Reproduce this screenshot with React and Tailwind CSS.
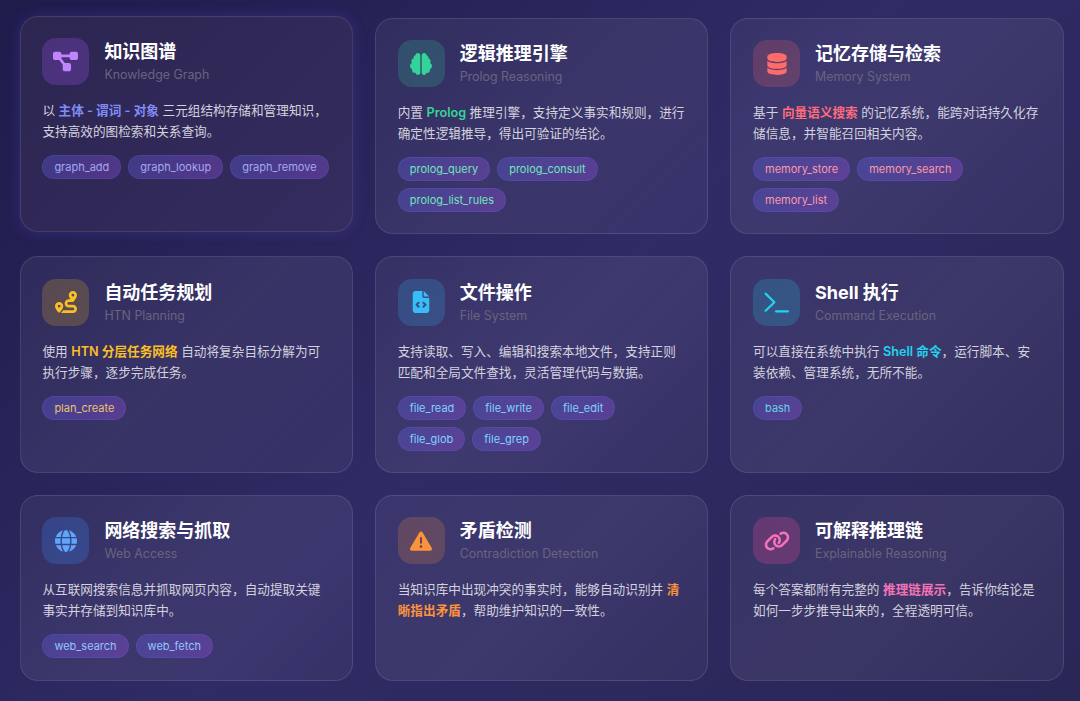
import {
  FaDiagramProject,
  FaBrain,
  FaDatabase,
  FaRoute,
  FaFileCode,
  FaGlobe,
  FaTriangleExclamation,
  FaLink,
} from "react-icons/fa6";

const TerminalIcon = ({ className }) => (
  <svg viewBox="0 0 24 24" fill="none" stroke="currentColor" strokeWidth="2.1" strokeLinecap="round" strokeLinejoin="round" className={className}>
    <path d="M1.5 3.5 10 11.8 1.5 20" />
    <path d="M11.5 20.5H23" />
  </svg>
);

const CARDS = [
  {
    icon: FaDiagramProject, iconClass: "text-[#c084fc] text-[25px]", box: "bg-[#a855f7]/25",
    title: "知识图谱", sub: "Knowledge Graph", hl: "text-[#818cf8]", chip: "text-[#a5a8f0]",
    before: "以 ", mark: "主体 - 谓词 - 对象", after: " 三元组结构存储和管理知识，支持高效的图检索和关系查询。",
    tools: ["graph_add", "graph_lookup", "graph_remove"],
  },
  {
    icon: FaBrain, iconClass: "text-[#34d399] text-[22px]", box: "bg-[#34d399]/20",
    title: "逻辑推理引擎", sub: "Prolog Reasoning", hl: "text-[#34d399]", chip: "text-[#6ee7b7]",
    before: "内置 ", mark: "Prolog", after: " 推理引擎，支持定义事实和规则，进行确定性逻辑推导，得出可验证的结论。",
    tools: ["prolog_query", "prolog_consult", "prolog_list_rules"],
  },
  {
    icon: FaDatabase, iconClass: "text-[#ff6b6b] text-[22px]", box: "bg-[#ff6b6b]/20",
    title: "记忆存储与检索", sub: "Memory System", hl: "text-[#ff6b7a]", chip: "text-[#fb9aa5]",
    before: "基于 ", mark: "向量语义搜索", after: " 的记忆系统，能跨对话持久化存储信息，并智能召回相关内容。",
    tools: ["memory_store", "memory_search", "memory_list"],
  },
  {
    icon: FaRoute, iconClass: "text-[#fbbf24] text-[22px]", box: "bg-[#fbbf24]/20",
    title: "自动任务规划", sub: "HTN Planning", hl: "text-[#fbbf24]", chip: "text-[#e9c46a]",
    before: "使用 ", mark: "HTN 分层任务网络", after: " 自动将复杂目标分解为可执行步骤，逐步完成任务。",
    tools: ["plan_create"],
  },
  {
    icon: FaFileCode, iconClass: "text-[#38bdf8] text-[22px]", box: "bg-[#38bdf8]/20",
    title: "文件操作", sub: "File System", hl: "text-[#38bdf8]", chip: "text-[#7dd3fc]",
    before: "支持读取、写入、编辑和搜索本地文件，支持正则匹配和全局文件查找，灵活管理代码与数据。", mark: "", after: "",
    tools: ["file_read", "file_write", "file_edit", "file_glob", "file_grep"],
  },
  {
    icon: TerminalIcon, iconClass: "text-[#22d3ee] w-[25px] h-[25px]", box: "bg-[#22d3ee]/20",
    title: "Shell 执行", sub: "Command Execution", hl: "text-[#22d3ee]", chip: "text-[#67d3ea]",
    before: "可以直接在系统中执行 ", mark: "Shell 命令", after: "，运行脚本、安装依赖、管理系统，无所不能。",
    tools: ["bash"],
  },
  {
    icon: FaGlobe, iconClass: "text-[#60a5fa] text-[22px]", box: "bg-[#3b82f6]/25",
    title: "网络搜索与抓取", sub: "Web Access", hl: "text-[#60a5fa]", chip: "text-[#93c5fd]",
    before: "从互联网搜索信息并抓取网页内容，自动提取关键事实并存储到知识库中。", mark: "", after: "",
    tools: ["web_search", "web_fetch"],
  },
  {
    icon: FaTriangleExclamation, iconClass: "text-[#fb923c] text-[22px]", box: "bg-[#fb923c]/20",
    title: "矛盾检测", sub: "Contradiction Detection", hl: "text-[#fb923c]", chip: "",
    before: "当知识库中出现冲突的事实时，能够自动识别并 ", mark: "清晰指出矛盾", after: "，帮助维护知识的一致性。",
    tools: [],
  },
  {
    icon: FaLink, iconClass: "text-[#f472b6] text-[26px]", box: "bg-[#ec4899]/25",
    title: "可解释推理链", sub: "Explainable Reasoning", hl: "text-[#f472b6]", chip: "",
    before: "每个答案都附有完整的 ", mark: "推理链展示", after: "，告诉你结论是如何一步步推导出来的，全程透明可信。",
    tools: [],
  },
];

function Card({ card, lifted }) {
  const Icon = card.icon;
  return (
    <div
      className={
        "rounded-[18px] border py-[21.5px] px-[21.7px] " +
        (lifted
          ? "-translate-y-[2px] border-[#ffffff]/10 bg-[linear-gradient(135deg,#2c2651,#352c5f)] shadow-[0_0_14px_rgba(90,75,210,0.28)]"
          : "border-[#ffffff]/10 bg-[linear-gradient(135deg,rgba(255,255,255,0.05),rgba(255,255,255,0.07)_50%,rgba(255,255,255,0.04))]")
      }
    >
      <div className="flex items-center gap-[15px] mb-[15px]">
        <div className={"w-[47px] h-[47px] rounded-[14px] flex items-center justify-center shrink-0 " + card.box}>
          <Icon className={card.iconClass} />
        </div>
        <div className="pt-[1px]">
          <h3 className="text-[18px] leading-[24px] font-bold text-white">{card.title}</h3>
          <p className="text-[12.4px] leading-[18px] mt-[2px] text-[#68647f]">{card.sub}</p>
        </div>
      </div>
      <p className="text-[12.65px] leading-[21px] text-[#d4d2de]">
        {card.before}
        {card.mark && <strong className={"font-semibold " + card.hl}>{card.mark}</strong>}
        {card.after}
      </p>
      {card.tools.length > 0 && (
        <div className="flex flex-wrap gap-[7px] mt-[13px]">
          {card.tools.map((t) => (
            <span
              key={t}
              className={
                "h-[24px] leading-[23px] px-[11px] rounded-full border border-[#6366f1]/20 text-[11px] bg-[linear-gradient(135deg,rgba(99,102,241,0.3),rgba(168,85,247,0.3))] " +
                card.chip
              }
            >
              {t}
            </span>
          ))}
        </div>
      )}
    </div>
  );
}

export default function App() {
  return (
    <div className="h-[701px] overflow-hidden bg-[linear-gradient(135deg,#1f1b4b_0%,#302b65_50%,#2a2656_100%)] font-['Inter','Noto_Sans_CJK_SC',sans-serif]">
      <div className="grid grid-cols-3 grid-rows-[216.6px_216.6px_186px] gap-[22px] pl-[19.7px] pr-[16.3px] pt-[17.7px]">
        {CARDS.map((c, i) => (
          <Card key={c.title} card={c} lifted={i === 0} />
        ))}
      </div>
    </div>
  );
}
